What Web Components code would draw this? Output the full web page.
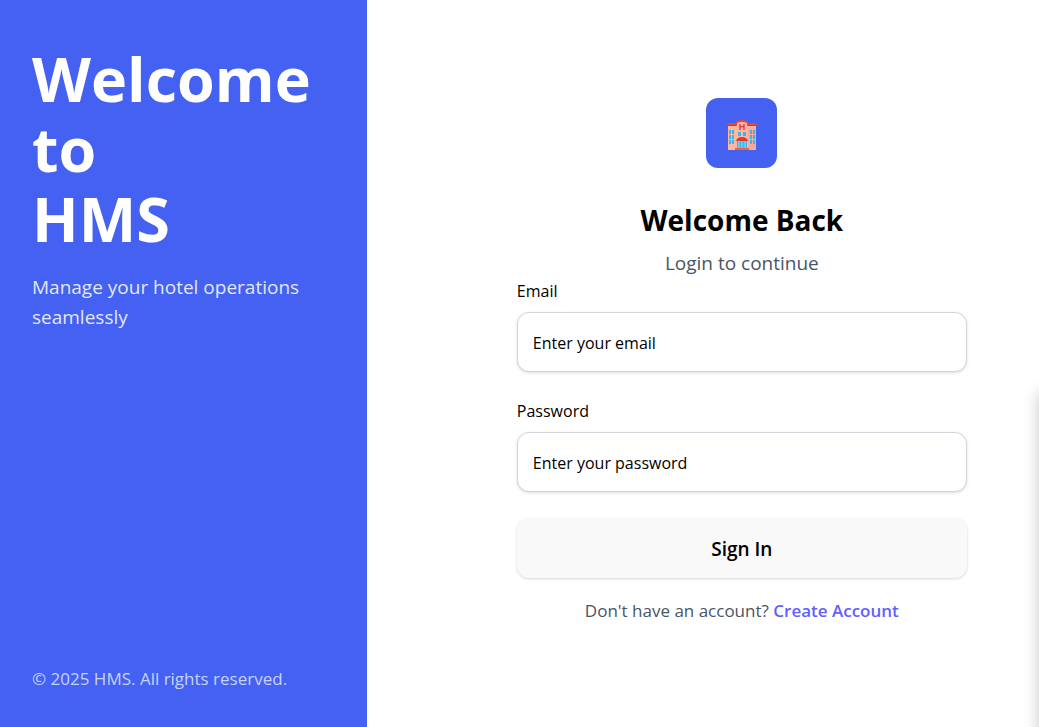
<!DOCTYPE html>
<html lang="en">
<head>
<meta charset="utf-8">
<meta name="viewport" content="width=device-width, initial-scale=1">
<title>HMS Login</title>
<style>
  body { margin: 0; font-family: "Segoe UI", "Open Sans", "Noto Sans", sans-serif; color: #000; background: #fff; }
</style>
</head>
<body>
<hms-auth-layout>
  <hms-welcome-panel slot="aside">
    <span slot="title">Welcome to
HMS</span>
    <span slot="tagline">Manage your hotel operations seamlessly</span>
    <span slot="legal">© 2025 HMS. All rights reserved.</span>
  </hms-welcome-panel>
  <hms-login-form></hms-login-form>
</hms-auth-layout>

<script>
  function define(name, html) {
    const template = document.createElement('template');
    template.innerHTML = html;
    customElements.define(name, class extends HTMLElement {
      constructor() {
        super();
        this.attachShadow({ mode: 'open' }).append(template.content.cloneNode(true));
      }
    });
  }

  define('hms-auth-layout', `
    <style>
      :host { display: grid; grid-template-columns: 6fr 11fr; min-height: 100vh; position: relative; overflow: hidden; }
      main { display: flex; align-items: center; justify-content: center; padding: 24px 0 30px 78px; }
      ::slotted(hms-login-form) { flex: 0 1 450px; }
      /* Shadow cast by the drawer parked past the right edge */
      .drawer { position: absolute; left: 100%; top: 392px; bottom: -20px; width: 24px; box-shadow: 0 0 16px rgba(0, 0, 0, .22); }
    </style>
    <slot name="aside"></slot>
    <main><slot></slot></main>
    <div class="drawer"></div>
  `);

  define('hms-welcome-panel', `
    <style>
      :host { display: flex; flex-direction: column; justify-content: space-between; box-sizing: border-box; padding: 44px 32px 36px; background: #4461f2; color: #fff; }
      h1 { margin: 0 0 18px; font-size: 61px; line-height: 70px; font-weight: 700; white-space: pre-line; }
      p { margin: 0; font-size: 19px; line-height: 30px; color: #e0e7ff; }
      footer { font-size: 17px; line-height: 24px; color: #c6d2ff; }
    </style>
    <header>
      <h1><slot name="title"></slot></h1>
      <p><slot name="tagline"></slot></p>
    </header>
    <footer><slot name="legal"></slot></footer>
  `);

  define('hms-hotel-logo', `
    <style>
      :host { display: flex; align-items: center; justify-content: center; width: 71px; height: 70px; border-radius: 12px; background: #4461f2; }
      svg { display: block; width: 30px; height: 30px; margin-top: 4px; }
    </style>
    <svg viewBox="0 0 30 30" role="img" aria-label="Hotel">
      <path d="M1 5h8V3q2-2 6-2t6 2v2h8v25H1z" fill="#ffb8a0"/>
      <path d="M21 7h8v23h-8z" fill="#ffa893"/>
      <path d="M1 3h8V2q2-2 6-2t6 2v1h8q1 0 1 1v2H20V3q-2-1-5-1t-5 1v3H0V4q0-1 1-1z" fill="#e8473f"/>
      <path d="M0 5h9v1H0zM21 5h9v1h-9z" fill="#cf3048"/>
      <text x="15" y="10" text-anchor="middle" font-family="Liberation Sans" font-size="9" font-weight="700" fill="#df3740">H</text>
      <g fill="#3fb4ec">
        <path d="M2 10h2v4H2zM5 10h2v4H5zM2 15h2v4H2zM5 15h2v4H5zM2 20h2v4H2zM5 20h2v4H5z"/>
        <path d="M23 10h2v4h-2zM26 10h2v4h-2zM23 15h2v4h-2zM26 15h2v4h-2zM23 20h2v4h-2zM26 20h2v4h-2z"/>
        <path d="M11 12h3v4h-3zM16 12h3v4h-3zM10 21h10v8H10z"/>
      </g>
      <path d="M12 21v8M15 21v8M18 21v8" stroke="#8fdcfa"/>
      <path d="M9 21q1-4 6-4t6 4z" fill="#d93b38"/>
      <path d="M8 28h14v2H8z" fill="#f1643a"/>
    </svg>
  `);

  define('hms-button', `
    <style>
      :host { display: block; }
      button { display: block; width: 100%; height: 60px; padding: 2px 16px 0; border: 0; border-radius: 12px; background: #f9f9f9; color: #000; font: 600 19px/24px "Segoe UI", "Open Sans", "Noto Sans", sans-serif; box-shadow: 0 1px 3px rgba(0, 0, 0, .16); cursor: pointer; }
    </style>
    <button type="submit"><slot></slot></button>
  `);

  customElements.define('hms-field', class extends HTMLElement {
    connectedCallback() {
      if (this.shadowRoot) return;
      this.attachShadow({ mode: 'open' }).innerHTML = `
        <style>
          :host { display: block; }
          label { display: block; margin-bottom: 8px; font-size: 16px; line-height: 26px; }
          input { display: block; box-sizing: border-box; width: 100%; height: 60px; padding: 3px 15px 0; border: 1px solid #d1d5dc; border-radius: 12px; background: #fff; color: #000; font: inherit; font-size: 16px; box-shadow: 0 1px 3px rgba(0, 0, 0, .14); outline: none; }
          input::placeholder { color: #000; opacity: 1; }
          input:focus { border-color: #4461f2; }
        </style>
        <label for="control"></label>
        <input id="control">
      `;
      const input = this.shadowRoot.querySelector('input');
      this.shadowRoot.querySelector('label').textContent = this.getAttribute('label');
      input.type = this.getAttribute('type');
      input.placeholder = this.getAttribute('placeholder');
    }
  });

  define('hms-login-form', `
    <style>
      :host { display: block; }
      hms-hotel-logo { margin: 0 auto 32px; }
      h2 { margin: 0 0 10px; font-size: 28px; line-height: 40px; font-weight: 700; text-align: center; }
      .lead { margin: 0 0 2px; font-size: 19px; line-height: 26px; text-align: center; color: #4a5565; }
      form { display: grid; gap: 26px; }
      .signup { margin: 20px 0 0; font-size: 17px; line-height: 26px; text-align: center; color: #4a5565; }
      a { color: #615fff; font-weight: 600; text-decoration: none; }
    </style>
    <hms-hotel-logo></hms-hotel-logo>
    <h2>Welcome Back</h2>
    <p class="lead">Login to continue</p>
    <form>
      <hms-field label="Email" type="email" placeholder="Enter your email"></hms-field>
      <hms-field label="Password" type="password" placeholder="Enter your password"></hms-field>
      <hms-button>Sign In</hms-button>
    </form>
    <p class="signup">Don't have an account? <a href="#signup">Create Account</a></p>
  `);
</script>
</body>
</html>
